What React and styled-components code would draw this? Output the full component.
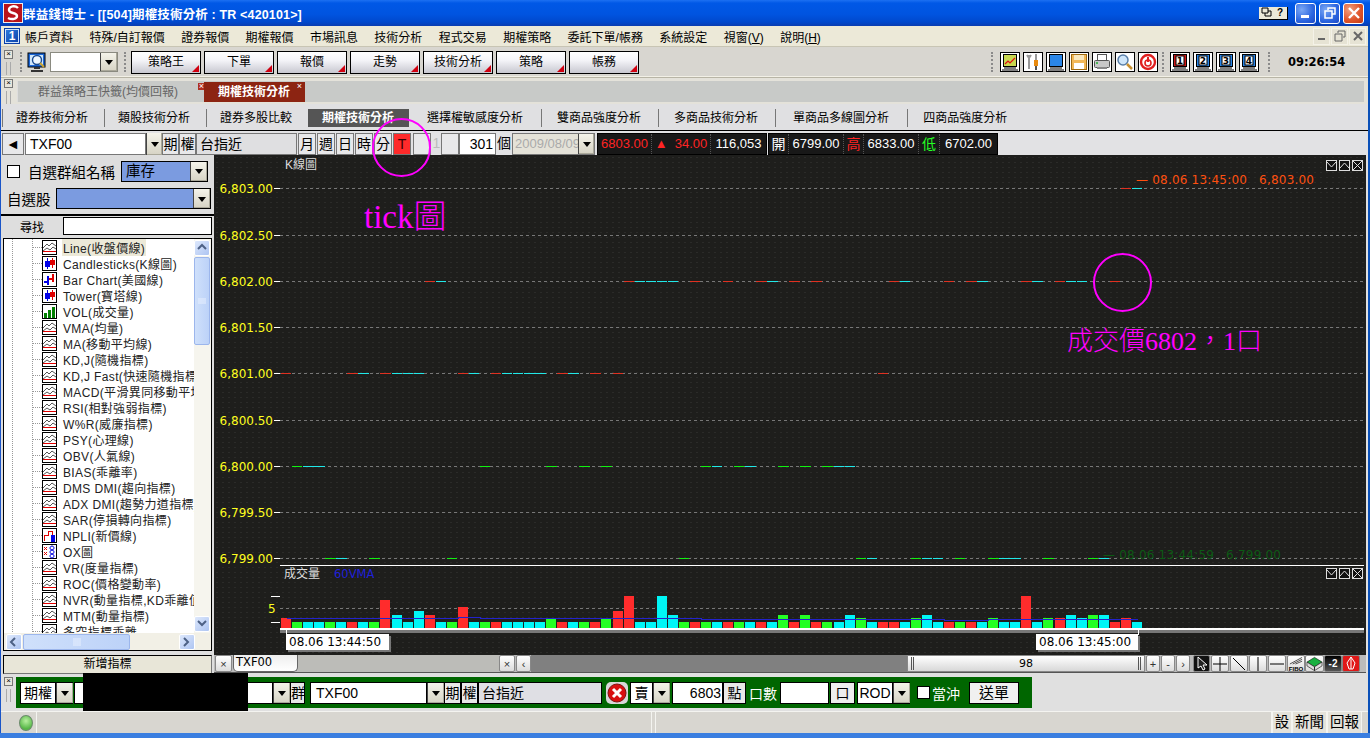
import React from 'react';
import styled, { createGlobalStyle } from 'styled-components';

const ui = `"Liberation Sans", "Noto Sans CJK TC", sans-serif`;
const wide = `"DejaVu Sans", "Noto Sans CJK TC", sans-serif`;

const GlobalStyle = createGlobalStyle`
  html, body { margin: 0; padding: 0; background: #e0e0e0; }
  * { box-sizing: border-box; }
  body { font-family: ${ui}; font-size: 12px; color: #000; }
`;

const Win = styled.div`
  position: relative;
  width: 1370px;
  height: 738px;
  overflow: hidden;
  display: flex;
  flex-direction: column;
`;

/* ---------- title bar ---------- */
const TitleBar = styled.div`
  height: 26px;
  flex: none;
  display: flex;
  align-items: center;
  padding: 0 6px 0 3px;
  background: linear-gradient(180deg, #1c70f2 0, #0058e6 12%, #0054e0 55%, #0048cc 85%, #0a3cb0 100%);
`;
const TitleLogo = styled.svg`
  flex: none;
`;
const TitleText = styled.div`
  color: #fff;
  font-size: 12.5px;
  font-weight: 700;
  letter-spacing: 0.15px;
  white-space: nowrap;
`;
const HelpBox = styled.div`
  margin-left: auto;
  width: 29px;
  height: 13px;
  display: flex;
  background: #ece9d8;
  border-right: 1px solid #000;
  border-bottom: 1px solid #000;
  font-size: 10px;
  font-weight: 700;
  line-height: 12px;
  text-align: center;
  span { flex: 1; }
`;
const XpBtn = styled.div`
  width: 21px;
  height: 21px;
  margin-left: ${({ $first }) => ($first ? 7 : 3)}px;
  border: 1px solid #fff;
  border-radius: 3px;
  display: flex;
  align-items: center;
  justify-content: center;
  background: ${({ $red }) =>
    $red
      ? 'radial-gradient(circle at 30% 30%, #f0a080, #e0562c 55%, #c23a14)'
      : 'radial-gradient(circle at 30% 30%, #7aa8f5, #2c66e0 60%, #1c48c4)'};
`;

/* ---------- menu ---------- */
const Frame = styled.div`
  flex: 1;
  min-height: 0;
  display: flex;
  flex-direction: column;
  border-left: 1px solid #1a55c8;
  border-right: 2px solid #0a50b8;
`;
const MenuBar = styled.div`
  height: 21px;
  flex: none;
  display: flex;
  align-items: center;
  gap: 16.4px;
  padding: 0 2px 0 3px;
  background: #ece9d8;
  border-bottom: 1px solid #c8c5b4;
  font-size: 12px;
  white-space: nowrap;
`;
const MenuLogo = styled.div`
  width: 16px;
  height: 16px;
  margin-right: -11.4px;
  background: linear-gradient(135deg, #2e7de0, #0a3fa8);
  border: 1px solid #0a3fa8;
  color: #fff;
  text-align: center;
  font-size: 12px;
  line-height: 14px;
  font-weight: 700;
  box-shadow: inset 0 0 0 1px #cfe2fa;
`;
const MdiGroup = styled.div`
  margin-left: auto;
  display: flex;
  gap: 1px;
`;
const MdiBtn = styled.div`
  width: 17px;
  height: 17px;
  background: #e6e3d4;
  border: 1px solid #f4f2e8;
  display: flex;
  align-items: center;
  justify-content: center;
`;

/* ---------- toolbars ---------- */
const ToolBar = styled.div`
  height: 31px;
  flex: none;
  display: flex;
  align-items: center;
  background: #d8d6d0;
  border-bottom: 1px solid #b8b5a6;
  box-shadow: inset 0 -1px 0 #f2f0e6;
`;
const GripWrap = styled.div`
  width: 11px;
  margin-left: 2px;
  display: flex;
  flex-direction: column;
  align-items: center;
  gap: 3px;
`;
const GripClose = styled.div`
  width: 9px;
  height: 9px;
  border: 1px solid #777;
  background: #e8e6dc;
  font-size: 8px;
  line-height: 6px;
  text-align: center;
`;
const GripBars = styled.div`
  width: 5px;
  height: 13px;
  border-left: 1px solid #aaa;
  border-right: 1px solid #aaa;
`;
const DotGrip = styled.div`
  width: 2px;
  height: 20px;
  margin: 0 ${({ $r }) => $r ?? 6}px 0 ${({ $l }) => $l ?? 6}px;
  border-left: 2px dotted #8a8a8a;
`;
const SearchMonitor = styled.svg`
  flex: none;
`;
const Combo = styled.div`
  width: 68px;
  height: 20px;
  margin-left: 3px;
  display: flex;
  justify-content: flex-end;
  background: #fff;
  border: 1px solid #8a8a80;
`;
const Drop = styled.div`
  width: ${({ $w }) => $w ?? 17}px;
  height: 100%;
  flex: none;
  position: relative;
  background: linear-gradient(180deg, #f4f3ea, #d6d3c4);
  border-left: 1px solid #444;
  box-shadow: inset -1px -1px 0 #aaa89a;
  &::after {
    content: '';
    position: absolute;
    left: 50%;
    top: 50%;
    margin: -2px 0 0 -4px;
    border-style: solid;
    border-width: 5px 4px 0;
    border-color: #000 transparent transparent;
  }
`;
const TabBtn = styled.div`
  position: relative;
  width: 70px;
  height: 23px;
  margin-right: 3px;
  flex: none;
  border: 1px solid #000;
  background: linear-gradient(180deg, #fff 0, #f4f4f8 40%, #c8c8d0 100%);
  text-align: center;
  font-size: 12px;
  line-height: 21px;
  &::after {
    content: '';
    position: absolute;
    right: 1px;
    bottom: 1px;
    border-style: solid;
    border-width: 0 0 7px 7px;
    border-color: transparent transparent #d00010 transparent;
  }
`;
const RightTools = styled.div`
  margin-left: auto;
  display: flex;
  align-items: center;
  gap: 3px;
  padding-right: 21px;
`;
const ToolIcon = styled.div`
  width: 20px;
  height: 20px;
  flex: none;
  background: #fff;
  border: 1px solid #000;
  display: flex;
  svg { display: block; }
`;
const Clock = styled.div`
  margin-left: 15px;
  width: 59px;
  font-family: ${wide};
  font-size: 11.5px;
  font-weight: 700;
  white-space: nowrap;
`;

/* ---------- tab strips ---------- */
const TabStrip = styled.div`
  height: 26px;
  flex: none;
  display: flex;
  align-items: center;
  background: #e4e2da;
`;
const TabBand = styled.div`
  margin-left: 3px;
  width: 1347px;
  height: 21px;
  display: flex;
  align-items: flex-end;
  background: #c8cac8;
  border-left: 1px solid #ddd;
`;
const WinTab = styled.div`
  position: relative;
  height: 20px;
  width: ${({ $w }) => $w}px;
  padding-left: ${({ $pl }) => $pl}px;
  line-height: 20px;
  font-size: 12px;
  white-space: nowrap;
  color: ${({ $on }) => ($on ? '#fff' : '#666')};
  font-weight: ${({ $on }) => ($on ? 700 : 400)};
  background: ${({ $on }) => ($on ? '#8c2412' : 'transparent')};
`;
const TabClose = styled.span`
  position: absolute;
  top: 1px;
  right: ${({ $r }) => $r}px;
  width: 7px;
  height: 7px;
  font-size: 9px;
  line-height: 6px;
  text-align: center;
  font-weight: 400;
  color: #fff;
  background: ${({ $red }) => ($red ? '#b03020' : 'transparent')};
`;
const SubTabs = styled.div`
  height: 27px;
  flex: none;
  display: flex;
  align-items: center;
  padding: 2px 0 0 1px;
  background: #e0e0e2;
  border-bottom: 1px solid #000;
`;
const SubTab = styled.div`
  height: 18px;
  padding: 0 ${({ $pr }) => $pr ?? 16}px 0 ${({ $pl }) => $pl ?? 13}px;
  line-height: 18px;
  white-space: nowrap;
  font-size: 12px;
  border-left: ${({ $plain }) => ($plain ? 'none' : '1px solid #777')};
  background: ${({ $on }) => ($on ? '#555' : 'transparent')};
  color: ${({ $on }) => ($on ? '#fff' : '#000')};
  font-weight: ${({ $on }) => ($on ? 700 : 400)};
`;

/* ---------- symbol row ---------- */
const SymbolRow = styled.div`
  height: 24px;
  flex: none;
  display: flex;
  align-items: flex-start;
  padding-top: 2px;
  background: #e2e2e4;
`;
const Cell = styled.div`
  flex: none;
  width: ${({ $w }) => $w}px;
  height: 22px;
  margin-left: ${({ $ml }) => $ml ?? 0}px;
  padding: ${({ $pad }) => $pad ?? '0'};
  border: ${({ $bare }) => ($bare ? 'none' : '1px solid #777')};
  background: ${({ $bg }) => $bg ?? '#e8e8ea'};
  color: ${({ $fg }) => $fg ?? '#000'};
  text-align: ${({ $align }) => $align ?? 'center'};
  font-size: 14px;
  line-height: 20px;
  white-space: nowrap;
  overflow: hidden;
`;
const DateCell = styled(Cell)`
  display: flex;
  justify-content: space-between;
  font-size: 13px;
  span { overflow: hidden; }
`;
const PriceStrip = styled.div`
  flex: none;
  height: 22px;
  margin-left: ${({ $ml }) => $ml ?? 0}px;
  display: flex;
  background: #181818;
  border: 1px solid #000;
`;
const PriceCell = styled.div`
  width: ${({ $w }) => $w}px;
  color: ${({ $c }) => $c ?? '#fff'};
  font-size: ${({ $big }) => ($big ? 14 : 13)}px;
  text-align: center;
  line-height: 20px;
  white-space: nowrap;
  border-right: 1px dotted #555;
  &:last-child { border-right: none; }
`;

/* ---------- main ---------- */
const Main = styled.div`
  flex: none;
  height: 520px;
  display: flex;
`;
const Side = styled.div`
  width: 213px;
  flex: none;
  display: flex;
  flex-direction: column;
  background: #dedede;
`;
const SideRow = styled.div`
  height: ${({ $h }) => $h}px;
  flex: none;
  display: flex;
  align-items: center;
  gap: ${({ $gap }) => $gap ?? 0}px;
  padding: ${({ $pt }) => $pt ?? 0}px ${({ $pr }) => $pr ?? 3}px 0 ${({ $pl }) => $pl ?? 0}px;
  font-size: ${({ $fs }) => $fs ?? 14.5}px;
  white-space: nowrap;
  border-bottom: ${({ $line }) => ($line ? '2px solid #000' : 'none')};
`;
const Check = styled.div`
  width: 13px;
  height: 13px;
  flex: none;
  margin-left: ${({ $ml }) => $ml ?? 0}px;
  background: #fff;
  border: 1px solid #000;
`;
const BlueSelect = styled.div`
  flex: ${({ $w }) => ($w ? 'none' : '1')};
  width: ${({ $w }) => ($w ? `${$w}px` : 'auto')};
  height: 21px;
  margin-left: ${({ $ml }) => $ml ?? 0}px;
  display: flex;
  justify-content: space-between;
  padding-left: 4px;
  background: #7b9be0;
  border: 1px solid #000;
  line-height: 19px;
`;
const SearchInput = styled.div`
  flex: 1;
  height: 18px;
  background: #fff;
  border: 1px solid #000;
`;
const TreeBox = styled.div`
  margin: 2px 0 0 2px;
  width: 209px;
  height: 413px;
  display: flex;
  flex-direction: column;
  border: 1px solid #000;
  background: #fff;
`;
const TreeTop = styled.div`
  flex: 1;
  min-height: 0;
  display: flex;
`;
const TreeList = styled.div`
  width: 190px;
  flex: none;
  overflow: hidden;
  padding-left: 38px;
  background:
    repeating-linear-gradient(180deg, #999 0 1px, transparent 1px 2px) 8px 0 / 1px 100% no-repeat,
    repeating-linear-gradient(180deg, #999 0 1px, transparent 1px 2px) 28px 0 / 1px 100% no-repeat,
    #fff;
`;
const TreeItem = styled.div`
  position: relative;
  height: 16px;
  display: flex;
  align-items: center;
  gap: 5px;
  font-size: 12px;
  letter-spacing: 0.35px;
  white-space: nowrap;
  color: #222;
  &::before {
    content: '';
    position: absolute;
    left: -10px;
    top: 8px;
    width: 10px;
    border-top: 1px dotted #999;
  }
`;
const TreeLabel = styled.span`
  padding: 0 1px;
  background: ${({ $sel }) => ($sel ? '#ece9d8' : 'transparent')};
`;
const TreeGlyph = styled.svg`
  flex: none;
`;
const VScroll = styled.div`
  width: 17px;
  flex: none;
  display: flex;
  flex-direction: column;
  background: #f6f5ee;
  padding: 1px 1px 1px 0;
`;
const ScrollBtn = styled.div`
  flex: none;
  width: 16px;
  height: 16px;
  margin-right: ${({ $mr }) => $mr ?? 0}px;
  display: flex;
  align-items: center;
  justify-content: center;
  border: 1px solid #fff;
  border-radius: 2px;
  background: linear-gradient(135deg, #dde8fc, #aec5f2);
`;
const ScrollThumb = styled.div`
  flex: none;
  display: flex;
  align-items: center;
  justify-content: center;
  margin: ${({ $m }) => $m ?? 0};
  width: ${({ $w }) => ($w ? `${$w}px` : 'auto')};
  height: ${({ $h }) => ($h ? `${$h}px` : 'auto')};
  border: 1px solid #9cb6ec;
  border-radius: 2px;
  background: linear-gradient(90deg, #cfe0fb, #bcd2f8);
`;
const ScrollGap = styled.div`
  flex: 1;
`;
const HScroll = styled.div`
  height: 17px;
  flex: none;
  display: flex;
  align-items: center;
  padding-left: 2px;
  background: #f2f0e6;
`;
const AddBtn = styled.div`
  margin: 4px 0 0 2px;
  width: 209px;
  height: 19px;
  background: #e8e6d8;
  border: 1px solid #000;
  border-right-color: #777;
  border-bottom-color: #777;
  text-align: center;
  line-height: 17px;
  font-size: 12px;
`;

/* ---------- chart ---------- */
const ChartCol = styled.div`
  width: 1152px;
  flex: none;
  display: flex;
  flex-direction: column;
  background: #e0e0e0;
`;
const ChartPanel = styled.div`
  position: relative;
  flex: none;
  height: ${({ $h }) => $h}px;
  background-color: #1e1e1c;
  background-image: radial-gradient(#2b2b29 0.6px, transparent 0.8px);
  background-size: 6px 5px;
  svg { display: block; }
`;
const PanelTools = styled.div`
  position: absolute;
  top: ${({ $top }) => $top}px;
  right: 3px;
  display: flex;
  gap: 2px;
`;
const PanelTool = styled.div`
  width: 11px;
  height: 11px;
  border: 1px solid #ddd;
  background: #111;
`;
const ScrollRow = styled.div`
  height: 18px;
  flex: none;
  display: flex;
  align-items: stretch;
  padding-left: 1px;
  background: #bbb;
  border-bottom: 1px solid #555;
`;
const SmallBtn = styled.div`
  flex: none;
  width: ${({ $w }) => $w ?? 15}px;
  margin-left: ${({ $ml }) => $ml ?? 0}px;
  background: ${({ $bg }) => $bg ?? 'linear-gradient(180deg, #fff, #dcdcdc)'};
  border: 1px solid #888;
  border-radius: 2px;
  display: flex;
  align-items: center;
  justify-content: center;
  font-size: 11px;
  color: #333;
  overflow: hidden;
`;
const MinusTwo = styled.span`
  color: #fff;
  font-weight: 700;
  font-size: 10px;
`;
const SeriesTab = styled.div`
  flex: none;
  width: 65px;
  margin-left: 1px;
  padding-left: 2px;
  font-family: ${wide};
  font-size: 11.5px;
  line-height: 15px;
  background: linear-gradient(180deg, #eee, #fff);
  border: 1px solid #666;
  border-top: none;
  border-radius: 0 0 5px 5px;
`;
const ScrollFill = styled.div`
  flex: none;
  width: ${({ $w }) => $w}px;
  background: ${({ $bg }) => $bg};
`;
const ZoomThumb = styled.div`
  flex: none;
  width: 238px;
  display: flex;
  align-items: center;
  justify-content: space-between;
  padding: 0 3px;
  background: linear-gradient(180deg, #fff, #d8d8d8);
  border: 1px solid #888;
  font-family: ${wide};
  font-size: 11px;
  i { width: 3px; height: 13px; border-left: 1px solid #555; border-right: 1px solid #555; }
`;

/* ---------- order bar ---------- */
const OrderRow = styled.div`
  flex: none;
  height: 36px;
  display: flex;
  align-items: flex-start;
  padding-top: 2px;
  background: #e0e0e0;
`;
const OrderBar = styled.div`
  margin-left: 2px;
  width: 1016px;
  height: 31px;
  display: flex;
  align-items: center;
  padding-left: 4px;
  background: #006600;
`;
const OField = styled.div`
  flex: none;
  width: ${({ $w }) => $w}px;
  height: 22px;
  margin-left: ${({ $ml }) => $ml ?? 0}px;
  padding: 0 ${({ $pad }) => $pad ?? 0}px;
  background: ${({ $bg }) => $bg ?? '#fff'};
  border: 1px solid #000;
  color: #000;
  text-align: ${({ $align }) => $align ?? 'center'};
  font-size: ${({ $fs }) => $fs ?? 14}px;
  line-height: 20px;
  white-space: nowrap;
`;
const OLabel = styled.div`
  flex: none;
  margin-left: ${({ $ml }) => $ml ?? 0}px;
  width: ${({ $w }) => $w}px;
  color: #fff;
  font-size: 14px;
`;
const ODrop = styled.div`
  flex: none;
  width: 17px;
  height: 22px;
  border: 1px solid #000;
  border-left: none;
  display: flex;
`;
const CancelIcon = styled.svg`
  flex: none;
  margin-left: 3px;
`;
const Redacted = styled.div`
  position: absolute;
  left: 83px;
  top: 673px;
  width: 165px;
  height: 38px;
  background: #000;
`;

/* ---------- status bar ---------- */
const StatusBar = styled.div`
  flex: none;
  height: 22px;
  display: flex;
  align-items: stretch;
  padding-left: 15px;
  background: #d8d6d0;
  border-top: 1px solid #f4f4f0;
  font-size: 14.5px;
`;
const Led = styled.div`
  width: 20px;
  display: flex;
  align-items: center;
  justify-content: center;
  &::after {
    content: '';
    width: 12px;
    height: 14px;
    border-radius: 50%;
    border: 1px solid #6a8a6a;
    background: radial-gradient(circle at 50% 35%, #b8f0a0, #58b848 70%);
  }
`;
const StatusPane = styled.div`
  flex: none;
  width: ${({ $w }) => $w}px;
  margin-right: ${({ $mr }) => $mr ?? 0}px;
  text-align: center;
  line-height: 20px;
  white-space: nowrap;
  background: ${({ $btn }) => ($btn ? '#e4e2da' : '#d8d6d0')};
  border-left: 1px solid #f4f4f0;
  border-right: 1px solid #f4f4f0;
`;
const BottomEdge = styled.div`
  flex: none;
  height: 5px;
  background: #3a7ee0;
`;

/* ---------- pen notes drawn over the shot ---------- */
const Ring = styled.div`
  position: absolute;
  left: ${({ $x }) => $x}px;
  top: ${({ $y }) => $y}px;
  width: 59px;
  height: 59px;
  border: 2px solid #f0f;
  border-radius: 50%;
`;
const Note = styled.div`
  position: absolute;
  left: ${({ $x }) => $x}px;
  top: ${({ $y }) => $y}px;
  color: #f0f;
  font-family: "Liberation Serif", "Noto Sans CJK TC", serif;
  font-size: ${({ $fs }) => $fs}px;
  font-weight: 300;
  line-height: 1;
  white-space: nowrap;
`;

/* ---------- data ---------- */
const PRICES = [
  6801, 6800, 6800, 6800, 6799, 6799, 6801, 6801, 6799, 6801, 6801, 6801, 6801, 6802, 6802, 6799,
  6801, 6801, 6800, 6801, 6801, 6801, 6801, 6801, 6800, 6801, 6801, 6800, 6801, 6800, 6801, 6802,
  6802, 6802, 6802, 6802, 6799, 6802, 6800, 6800, 6802, 6800, 6800, 6802, 6802, 6800, 6802, 6800,
  6802, 6800, 6800, 6800, 6799, 6799, 6801, 6802, 6802, 6799, 6799, 6799, 6802, 6799, 6802, 6802,
  6799, 6799, 6799, 6802, 6802, 6799, 6802, 6802, 6802, 6799, 6799, 6802, 6803, 6803,
];
const SIDES = 'rgccgcrcgrcccrcgrcgrccccgrcgrgrrccccgrgcrgcrcgrgrgccgcrrcgccrgrcgccrcgrccgcrrc';
const VOLS = [
  2, 1, 1, 1, 1, 1, 1, 1, 1, 7, 3, 1, 4, 3, 1, 1, 5, 1, 1, 1, 1, 1, 1, 1, 2, 1, 1, 1, 1, 2, 4, 8,
  1, 1, 8, 3, 1, 1, 1, 1, 1, 1, 1, 1, 1, 3, 1, 3, 1, 1, 1, 3, 2, 1, 1, 1, 1, 2, 3, 1, 1, 1, 1, 1,
  2, 1, 1, 8, 1, 2, 2, 3, 2, 3, 3, 1, 2, 1,
];
const SIDE_COLOR = { r: '#ff2c2c', g: '#24ff24', c: '#00f6f6' };
const LINE_COLOR = { r: '#e03020', g: '#10f010', c: '#20e8e8' };
const barX = (i) => 281 + 11.05 * i;
const priceY = (p) => Math.round(188.4 + (6803 - p) * 92.5);
const LEVELS = ['6,803.00', '6,802.50', '6,802.00', '6,801.50', '6,801.00', '6,800.50', '6,800.00', '6,799.50', '6,799.00'];

const MENU = ['帳戶資料', '特殊/自訂報價', '證券報價', '期權報價', '市場訊息', '技術分析', '程式交易', '期權策略', '委託下單/帳務', '系統設定'];
const TOOL_TABS = ['策略王', '下單', '報價', '走勢', '技術分析', '策略', '帳務'];
const INDICATORS = [
  ['Line(收盤價線)', 'line'], ['Candlesticks(K線圖)', 'candle'], ['Bar Chart(美國線)', 'bar'], ['Tower(寶塔線)', 'candle'],
  ['VOL(成交量)', 'vol'], ['VMA(均量)', 'line'], ['MA(移動平均線)', 'line'], ['KD,J(隨機指標)', 'line'],
  ['KD,J Fast(快速隨機指標)', 'line'], ['MACD(平滑異同移動平均線)', 'line'], ['RSI(相對強弱指標)', 'line'], ['W%R(威廉指標)', 'line'],
  ['PSY(心理線)', 'line'], ['OBV(人氣線)', 'line'], ['BIAS(乖離率)', 'line'], ['DMS DMI(趨向指標)', 'line'],
  ['ADX DMI(趨勢力道指標)', 'line'], ['SAR(停損轉向指標)', 'line'], ['NPLI(新價線)', 'npli'], ['OX圖', 'ox'],
  ['VR(度量指標)', 'line'], ['ROC(價格變動率)', 'line'], ['NVR(動量指標,KD乖離值)', 'line'], ['MTM(動量指標)', 'line'], ['多空指標乖離', 'line'],
];

/* ---------- icons ---------- */
const TreeIcon = ({ kind }) => (
  <TreeGlyph width="15" height="15" viewBox="0 0 15 15" shapeRendering="crispEdges">
    <rect x="0.5" y="0.5" width="14" height="14" fill="#fff" stroke="#000" />
    {kind === 'line' && (
      <g>
        <path d="M1 8l4-4 2 2 3-3 4 3M1 11l4-3 3 2 3-3 3 2" fill="none" stroke="#555" shapeRendering="auto" />
        <rect x="1" y="11" width="13" height="1" fill="#e00000" />
      </g>
    )}
    {kind === 'candle' && (
      <g>
        <rect x="5" y="2" width="1" height="11" fill="#0000d0" />
        <rect x="3" y="5" width="5" height="6" fill="#0000e8" />
        <rect x="10" y="2" width="1" height="10" fill="#e00000" />
        <rect x="8" y="4" width="5" height="5" fill="#e00000" />
      </g>
    )}
    {kind === 'bar' && (
      <g>
        <rect x="5" y="4" width="2" height="9" fill="#0000e8" />
        <rect x="2" y="9" width="3" height="2" fill="#0000e8" />
        <rect x="10" y="2" width="2" height="8" fill="#e00000" />
        <rect x="7" y="6" width="3" height="2" fill="#e00000" />
      </g>
    )}
    {kind === 'vol' && (
      <g fill="#008000">
        <rect x="2" y="9" width="3" height="5" />
        <rect x="6" y="6" width="3" height="8" />
        <rect x="10" y="3" width="3" height="11" />
      </g>
    )}
    {kind === 'npli' && (
      <g>
        <path d="M2 13V7h4V3h4v7" fill="none" stroke="#e00000" />
        <rect x="9" y="7" width="4" height="7" fill="#0000e8" />
      </g>
    )}
    {kind === 'ox' && (
      <g>
        <rect x="1" y="1" width="13" height="13" fill="#fff" />
        <path d="M2 3l3 3M5 3L2 6M2 8l3 3M5 8l-3 3" stroke="#e00000" fill="none" shapeRendering="auto" />
        <path d="M10 2a2 2 0 1 0 .01 0M10 6a2 2 0 1 0 .01 0M10 10a2 2 0 1 0 .01 0" stroke="#0000e0" fill="none" shapeRendering="auto" />
      </g>
    )}
  </TreeGlyph>
);

const Chevron = ({ dir }) => {
  const d = { up: 'M1 6l4-4 4 4', down: 'M1 2l4 4 4-4', left: 'M6 1L2 5l4 4', right: 'M2 1l4 4-4 4' }[dir];
  return (
    <svg width="10" height="10" viewBox="0 0 10 10">
      <path d={d} fill="none" stroke="#4d6185" strokeWidth="2" />
    </svg>
  );
};

const Stand = () => <path d="M3 15h12M1 17h16" stroke="#000" fill="none" />;

const ScreenIcon = ({ fill, children }) => (
  <ToolIcon>
    <svg width="18" height="18" viewBox="0 0 18 18">
      <rect x="2.5" y="1.5" width="13" height="12" fill={fill} stroke="#000" />
      {children}
      <Stand />
    </svg>
  </ToolIcon>
);

const NumberIcon = ({ n, fill }) => (
  <ScreenIcon fill={fill}>
    <rect x="5" y="3" width="8" height="9" fill="#fff" stroke="#000" />
    <text x="9" y="11" textAnchor="middle" fontSize="9" fontWeight="700" fontFamily={wide} fill="#000">{n}</text>
  </ScreenIcon>
);

const SvgIcon = ({ children }) => (
  <ToolIcon>
    <svg width="18" height="18" viewBox="0 0 18 18">{children}</svg>
  </ToolIcon>
);

const PanelButtons = ({ top }) => (
  <PanelTools $top={top}>
    {['M0 1l4.5 5L9 1', 'M0 7l4.5-5L9 7', 'M0 0l9 9M9 0L0 9'].map((d) => (
      <PanelTool key={d}>
        <svg width="9" height="9" viewBox="0 0 9 9">
          <path d={d} fill="none" stroke="#ddd" />
        </svg>
      </PanelTool>
    ))}
  </PanelTools>
);

const TimeTag = ({ x, w, label, tickX }) => (
  <g>
    <rect x={x + 2} y="636" width={w} height="16" fill="#777" />
    <rect x={x} y="634" width={w} height="16" fill="#fff" />
    <rect x={tickX} y="630" width="1" height="5" fill="#fff" />
    <text x={x + 3} y="646" fontFamily={wide} fontSize="12" fill="#000">{label}</text>
  </g>
);

const Grip = () => (
  <GripWrap>
    <GripClose>×</GripClose>
    <GripBars />
  </GripWrap>
);

const PriceChart = () => (
  <svg width="1152" height="410" viewBox="214 155 1152 410" shapeRendering="crispEdges">
    {LEVELS.map((label, i) => {
      const y = priceY(6803 - i * 0.5) + 0.5;
      return (
        <g key={label}>
          <line x1="280" x2="1364" y1={y} y2={y} stroke="#777" strokeDasharray="3 3" />
          <line x1="274" x2="280" y1={y} y2={y} stroke="#fff" />
          <text x="273" y={y + 4} textAnchor="end" fontFamily={wide} fontSize="12" fill="#ffff20">{label}</text>
        </g>
      );
    })}
    {PRICES.map((p, i) => (
      <line key={i} x1={barX(i)} x2={barX(i) + 10.4} y1={priceY(p) + 0.5} y2={priceY(p) + 0.5} stroke={LINE_COLOR[SIDES[i]]} />
    ))}
    <text x="285" y="169" fontFamily={ui} fontSize="12" fill="#ddd">K線圖</text>
    <text x="1136" y="184" fontFamily={wide} fontSize="12" letterSpacing="0.2" fill="#ff5010">{'— 08.06 13:45:00\u00a0\u00a0 6,803.00'}</text>
    <text x="1103" y="559" fontFamily={wide} fontSize="12" letterSpacing="0.2" fill="#0c5a14">{'— 08.06 13:44:59\u00a0\u00a0 6,799.00'}</text>
  </svg>
);

const VolumeChart = () => {
  const vma = `287,618.5 458,618.5 458,617.5 480,617.5 480,618.5 701,618.5 701,619.5 944,619.5 944,620.5 988,620.5 988,619.5 1138,619.5`;
  return (
    <svg width="1152" height="90" viewBox="214 565 1152 90" shapeRendering="crispEdges">
      <rect x="280" y="565" width="1084" height="1" fill="#fff" />
      <text x="284" y="578" fontFamily={ui} fontSize="12" fill="#ddd">成交量</text>
      <text x="334" y="578" fontFamily={wide} fontSize="11.5" fill="#2020d8">60VMA</text>
      <line x1="280" x2="1364" y1="608.5" y2="608.5" stroke="#777" strokeDasharray="3 3" />
      <text x="268" y="613" fontFamily={wide} fontSize="12" fill="#ffff20">5</text>
      <line x1="271" x2="280" y1="596.5" y2="596.5" stroke="#fff" />
      <line x1="271" x2="280" y1="622.5" y2="622.5" stroke="#fff" />
      {VOLS.map((v, i) => {
        const h = Math.round(2.2 + 3.75 * v);
        return <rect key={i} x={barX(i)} y={628 - h} width="10" height={h} fill={SIDE_COLOR[SIDES[i]]} />;
      })}
      <polyline points={vma} fill="none" stroke="#2222cc" />
      <rect x="280" y="628" width="1084" height="2" fill="#fff" />
      <rect x="280" y="630" width="1084" height="3" fill="#777" />
      <TimeTag x={286} w={103} label="08.06 13:44:50" tickX={286} />
      <TimeTag x={1036} w={102} label="08.06 13:45:00" tickX={1138} />
    </svg>
  );
};

const ToolGlyphs = () => (
  <>
    <SmallBtn $w={17} $ml={3} $bg="#111">
      <svg width="12" height="15" viewBox="0 0 12 15"><path d="M2 1v11l3-2 2 4 2-1-2-4h4z" fill="#222" stroke="#fff" /></svg>
    </SmallBtn>
    <SmallBtn $w={18} $ml={1}><svg width="14" height="14" viewBox="0 0 14 14"><path d="M7 0v14M0 7h14" stroke="#000" /></svg></SmallBtn>
    <SmallBtn $w={18} $ml={1}><svg width="14" height="14" viewBox="0 0 14 14"><path d="M1 1l12 12" stroke="#000" /></svg></SmallBtn>
    <SmallBtn $w={18} $ml={1}><svg width="14" height="14" viewBox="0 0 14 14"><path d="M7 0v14" stroke="#000" /></svg></SmallBtn>
    <SmallBtn $w={18} $ml={1}><svg width="14" height="14" viewBox="0 0 14 14"><path d="M0 7h14" stroke="#000" /></svg></SmallBtn>
    <SmallBtn $w={18} $ml={1}>
      <svg width="17" height="16" viewBox="0 0 17 16">
        <path d="M2 8L15 1M5 8L15 3M8 8l7-3" stroke="#000" fill="none" strokeWidth="0.7" />
        <text x="8.5" y="15" textAnchor="middle" fontSize="6.5" fontWeight="700" fontFamily={ui}>FIBO</text>
      </svg>
    </SmallBtn>
    <SmallBtn $w={19}>
      <svg width="18" height="16" viewBox="0 0 18 16">
        <path d="M1 6l8-5 8 5-8 5z" fill="#18b040" stroke="#000" strokeWidth="0.6" />
        <path d="M1 6v4l8 5v-4zM17 6v4l-8 5v-4z" fill="#ddd" stroke="#000" strokeWidth="0.6" />
      </svg>
    </SmallBtn>
    <SmallBtn $w={18} $bg="linear-gradient(180deg,#000,#555)">
      <MinusTwo>-2</MinusTwo>
    </SmallBtn>
    <SmallBtn $w={18} $bg="#e01818">
      <svg width="14" height="15" viewBox="0 0 14 15"><path d="M7 1l4 6-2 6H5L3 7z" fill="none" stroke="#fff" /><path d="M7 1v12" stroke="#fff" /></svg>
    </SmallBtn>
  </>
);

export default function App() {
  return (
    <Win>
      <GlobalStyle />
      <TitleBar>
        <TitleLogo width="20" height="20" viewBox="0 0 20 20">
          <rect x="0.5" y="0.5" width="19" height="19" fill="#b8141c" stroke="#eee" />
          <path d="M15 5C12 2 6 3 6 7c0 4 8 2 8 6 0 3-5 4-9 2" fill="none" stroke="#fff" strokeWidth="2.4" />
        </TitleLogo>
        <TitleText>群益錢博士 - [[504]期權技術分析 : TR &lt;420101&gt;]</TitleText>
        <HelpBox>
          <span>
            <svg width="13" height="11" viewBox="0 0 13 11"><path d="M2 1h6v5H2zM5 6v3h6V4H8" fill="none" stroke="#000" /></svg>
          </span>
          <span>?</span>
        </HelpBox>
        <XpBtn $first>
          <svg width="12" height="12" viewBox="0 0 12 12"><rect x="1" y="8" width="8" height="3" fill="#fff" /></svg>
        </XpBtn>
        <XpBtn>
          <svg width="14" height="14" viewBox="0 0 14 14"><path d="M5 4V2h7v6h-3M2 5h7v7H2z" fill="none" stroke="#fff" strokeWidth="1.5" /></svg>
        </XpBtn>
        <XpBtn $red>
          <svg width="14" height="14" viewBox="0 0 14 14"><path d="M2 2l10 10M12 2L2 12" stroke="#fff" strokeWidth="2.4" /></svg>
        </XpBtn>
      </TitleBar>

      <Frame>
        <MenuBar>
          <MenuLogo>1</MenuLogo>
          {MENU.map((m) => <span key={m}>{m}</span>)}
          <span>視窗(<u>V</u>)</span>
          <span>說明(<u>H</u>)</span>
          <MdiGroup>
            <MdiBtn><svg width="10" height="10" viewBox="0 0 10 10"><rect x="1" y="7" width="7" height="2" fill="#666" /></svg></MdiBtn>
            <MdiBtn><svg width="12" height="12" viewBox="0 0 12 12"><path d="M4 3V1h7v6H9M1 4h7v7H1z" fill="none" stroke="#666" /></svg></MdiBtn>
            <MdiBtn><svg width="10" height="10" viewBox="0 0 10 10"><path d="M1 1l8 8M9 1L1 9" stroke="#666" strokeWidth="2" /></svg></MdiBtn>
          </MdiGroup>
        </MenuBar>

        <ToolBar>
          <Grip />
          <DotGrip $l={6} $r={5} />
          <SearchMonitor width="20" height="20" viewBox="0 0 20 20">
            <rect x="1" y="1" width="17" height="14" fill="#1a66d8" stroke="#000" />
            <rect x="3" y="3" width="13" height="10" fill="#cfe6fa" />
            <circle cx="10" cy="8" r="4.5" fill="#eef6fe" stroke="#1a4a90" strokeWidth="1.4" />
            <path d="M13 11l4 4" stroke="#c8a030" strokeWidth="2" />
            <path d="M7 16h6M4 19h12" stroke="#333" strokeWidth="2" />
          </SearchMonitor>
          <Combo><Drop /></Combo>
          <DotGrip $l={6} $r={5} />
          {TOOL_TABS.map((t) => <TabBtn key={t}>{t}</TabBtn>)}
          <RightTools>
            <DotGrip $l={0} $r={4} />
            <ScreenIcon fill="#c8d850"><path d="M4 11l3-3 2 2 5-5" fill="none" stroke="#e01010" strokeWidth="1.2" /></ScreenIcon>
            <SvgIcon>
              <path d="M5 2v14M3 2l2 3 2-3" stroke="#999" strokeWidth="2" fill="none" />
              <path d="M12 1v7" stroke="#999" strokeWidth="2" />
              <rect x="10" y="7" width="4" height="6" fill="#e88a10" />
              <path d="M12 13v4" stroke="#555" strokeWidth="2" />
            </SvgIcon>
            <ScreenIcon fill="#2a86e8" />
            <SvgIcon>
              <rect x="1.5" y="1.5" width="15" height="15" fill="#f2b858" stroke="#a06a10" />
              <rect x="4" y="2" width="10" height="5" fill="#f8e8c0" />
              <rect x="4" y="10" width="10" height="6" fill="#fff" />
            </SvgIcon>
            <SvgIcon>
              <rect x="4.5" y="1.5" width="9" height="6" fill="#fff" stroke="#555" />
              <rect x="1.5" y="7.5" width="15" height="7" rx="1" fill="#c8c8c8" stroke="#555" />
              <circle cx="4" cy="10" r="1" fill="#20b030" />
              <rect x="4" y="14" width="10" height="2" fill="#888" />
            </SvgIcon>
            <SvgIcon>
              <circle cx="7" cy="7" r="5" fill="#cfe6fa" stroke="#5a7fa8" strokeWidth="1.5" />
              <path d="M11 11l5 5" stroke="#c89030" strokeWidth="2.5" />
            </SvgIcon>
            <SvgIcon>
              <circle cx="9" cy="9" r="7" fill="none" stroke="#e02020" strokeWidth="2.4" />
              <circle cx="9" cy="10" r="3" fill="none" stroke="#e02020" strokeWidth="1.6" />
              <path d="M9 4v5" stroke="#e02020" strokeWidth="2" />
            </SvgIcon>
            <DotGrip $l={1} $r={3} />
            <NumberIcon n="1" fill="#d01818" />
            <NumberIcon n="2" fill="#2a86e8" />
            <NumberIcon n="3" fill="#2a86e8" />
            <NumberIcon n="4" fill="#2a86e8" />
            <DotGrip $l={6} $r={0} />
            <Clock>09:26:54</Clock>
          </RightTools>
        </ToolBar>

        <TabStrip>
          <Grip />
          <TabBand>
            <WinTab $w={186} $pl={20}>
              群益策略王快籤(均價回報)
              <TabClose $r={-1} $red>×</TabClose>
            </WinTab>
            <WinTab $w={101} $pl={14} $on>
              期權技術分析
              <TabClose $r={2}>×</TabClose>
            </WinTab>
          </TabBand>
        </TabStrip>

        <SubTabs>
          <SubTab>證券技術分析</SubTab>
          <SubTab>類股技術分析</SubTab>
          <SubTab>證券多股比較</SubTab>
          <SubTab $plain $on $pl={14} $pr={15}>期權技術分析</SubTab>
          <SubTab $plain $pl={18} $pr={18}>選擇權敏感度分析</SubTab>
          <SubTab $pl={15} $pr={17}>雙商品強度分析</SubTab>
          <SubTab $pl={15} $pr={17}>多商品技術分析</SubTab>
          <SubTab $pl={17} $pr={18}>單商品多線圖分析</SubTab>
          <SubTab $pl={15}>四商品強度分析</SubTab>
        </SubTabs>

        <SymbolRow>
          <Cell $w={22} $ml={1}>◄</Cell>
          <Cell $w={121} $ml={1} $bg="#fff" $align="left" $pad="0 0 0 4px">TXF00</Cell>
          <Cell $w={16} $bare $bg="transparent"><Drop $w={16} /></Cell>
          <Cell $w={17}>期</Cell>
          <Cell $w={17}>權</Cell>
          <Cell $w={101} $align="left" $pad="0 0 0 3px" $bg="#dfdfe1">台指近</Cell>
          {['月', '週', '日', '時', '分'].map((c) => <Cell key={c} $w={18} $ml={1}>{c}</Cell>)}
          <Cell $w={18} $ml={1} $bg="#ff2a2a" $fg="#300">T</Cell>
          <Cell $w={18} $ml={2} />
          <Cell $w={9} $ml={1} $bare $bg="transparent" $fg="#bbb">1</Cell>
          <Cell $w={18} />
          <Cell $w={37} $bg="#fff" $align="right" $pad="0 2px 0 0">301</Cell>
          <Cell $w={16} $bare $bg="transparent">個</Cell>
          <DateCell $w={83} $bg="#e4e2d8" $fg="#aaa" $align="left" $pad="0 0 0 2px">
            <span>2009/08/09</span>
            <Drop $w={16} />
          </DateCell>
          <PriceStrip $ml={2}>
            <PriceCell $w={54} $c="#ff2424">6803.00</PriceCell>
            <PriceCell $w={59} $c="#ff2424">▲&nbsp;&nbsp;34.00</PriceCell>
            <PriceCell $w={55}>116,053</PriceCell>
          </PriceStrip>
          <PriceStrip $ml={1}>
            <PriceCell $w={20} $big>開</PriceCell>
            <PriceCell $w={55}>6799.00</PriceCell>
            <PriceCell $w={20} $c="#ff2424" $big>高</PriceCell>
            <PriceCell $w={55}>6833.00</PriceCell>
            <PriceCell $w={21} $c="#24ff24" $big>低</PriceCell>
            <PriceCell $w={57}>6702.00</PriceCell>
          </PriceStrip>
        </SymbolRow>

        <Main>
          <Side>
            <SideRow $h={28} $pl={6} $pt={4} $gap={8}>
              <Check />
              自選群組名稱
              <BlueSelect $w={87} $ml={-2}>庫存<Drop /></BlueSelect>
            </SideRow>
            <SideRow $h={33} $pl={6} $gap={5} $line>
              自選股
              <BlueSelect><span /><Drop /></BlueSelect>
            </SideRow>
            <SideRow $h={20} $pl={19} $pr={2} $gap={19} $fs={12}>
              尋找
              <SearchInput />
            </SideRow>
            <TreeBox>
              <TreeTop>
                <TreeList>
                  {INDICATORS.map(([label, kind], i) => (
                    <TreeItem key={label}>
                      <TreeIcon kind={kind} />
                      <TreeLabel $sel={i === 0}>{label}</TreeLabel>
                    </TreeItem>
                  ))}
                </TreeList>
                <VScroll>
                  <ScrollBtn><Chevron dir="up" /></ScrollBtn>
                  <ScrollThumb $h={88} $m="1px 0 0">
                    <svg width="8" height="7" viewBox="0 0 8 7"><path d="M0 1h8M0 3h8M0 5h8" stroke="#e8f0fe" /></svg>
                  </ScrollThumb>
                  <ScrollGap />
                  <ScrollBtn><Chevron dir="down" /></ScrollBtn>
                </VScroll>
              </TreeTop>
              <HScroll>
                <ScrollBtn><Chevron dir="left" /></ScrollBtn>
                <ScrollThumb $w={107} $h={16} $m="0 0 0 1px">
                  <svg width="8" height="8" viewBox="0 0 8 8"><path d="M1 0v8M3 0v8M5 0v8M7 0v8" stroke="#e8f0fe" /></svg>
                </ScrollThumb>
                <ScrollGap />
                <ScrollBtn $mr={16}><Chevron dir="right" /></ScrollBtn>
              </HScroll>
            </TreeBox>
            <AddBtn>新增指標</AddBtn>
          </Side>

          <ChartCol>
            <ChartPanel $h={410}>
              <PriceChart />
              <PanelButtons top={5} />
            </ChartPanel>
            <ChartPanel $h={90}>
              <VolumeChart />
              <PanelButtons top={3} />
            </ChartPanel>
            <ScrollRow>
              <SmallBtn $w={17}>×</SmallBtn>
              <SeriesTab>TXF00</SeriesTab>
              <ScrollFill $w={201} $bg="#bcbcb8" />
              <SmallBtn $w={16}>×</SmallBtn>
              <SmallBtn $w={15} $ml={1}>‹</SmallBtn>
              <ScrollFill $w={376} $bg="#808080" />
              <ZoomThumb><i />98<i /></ZoomThumb>
              <SmallBtn $w={14} $ml={1}>+</SmallBtn>
              <SmallBtn $w={14} $ml={1}>-</SmallBtn>
              <SmallBtn $w={14} $ml={1}>›</SmallBtn>
              <ToolGlyphs />
            </ScrollRow>
          </ChartCol>
        </Main>

        <OrderRow>
          <Grip />
          <OrderBar>
            <OField $w={36}>期權</OField>
            <ODrop><Drop /></ODrop>
            <OField $w={199} $ml={1} />
            <ODrop><Drop /></ODrop>
            <OField $w={15} $bg="#e8e8e8">群</OField>
            <OField $w={117} $ml={5} $align="left" $pad={5}>TXF00</OField>
            <ODrop><Drop /></ODrop>
            <OField $w={17} $bg="#e8e8e8">期</OField>
            <OField $w={17} $bg="#e8e8e8">權</OField>
            <OField $w={124} $bg="#dfdfe4" $align="left" $pad={3}>台指近</OField>
            <CancelIcon width="24" height="24" viewBox="0 0 24 24">
              <rect x="1" y="1" width="22" height="22" rx="5" fill="#d8d8d8" />
              <circle cx="12" cy="12" r="9" fill="#d81010" stroke="#801010" />
              <path d="M8 8l8 8M16 8l-8 8" stroke="#fff" strokeWidth="3" />
            </CancelIcon>
            <OField $w={23} $ml={1}>賣</OField>
            <ODrop><Drop /></ODrop>
            <OField $w={51} $ml={2} $align="right" $pad={1}>6803</OField>
            <OField $w={23} $bg="#e8e8e8">點</OField>
            <OLabel $w={31} $ml={3}>口數</OLabel>
            <OField $w={49} />
            <OField $w={25} $ml={1} $bg="#eee">口</OField>
            <OField $w={36} $ml={2}>ROD</OField>
            <ODrop><Drop /></ODrop>
            <Check $ml={7} />
            <OLabel $w={31} $ml={2}>當沖</OLabel>
            <OField $w={50} $ml={6} $bg="#f0f0f0" $fs={15}>送單</OField>
          </OrderBar>
        </OrderRow>

        <StatusBar>
          <Led />
          <StatusPane $w={616} $mr={3} />
          <StatusPane $w={617} />
          <StatusPane $w={20} $btn>設</StatusPane>
          <StatusPane $w={35} $btn>新聞</StatusPane>
          <StatusPane $w={35} $btn>回報</StatusPane>
        </StatusBar>
      </Frame>
      <BottomEdge />

      <Redacted />
      <Ring $x={372} $y={118} />
      <Ring $x={1093} $y={253} />
      <Note $x={364} $y={201} $fs={33}>tick圖</Note>
      <Note $x={1067} $y={329} $fs={26}>成交價6802，1口</Note>
    </Win>
  );
}
